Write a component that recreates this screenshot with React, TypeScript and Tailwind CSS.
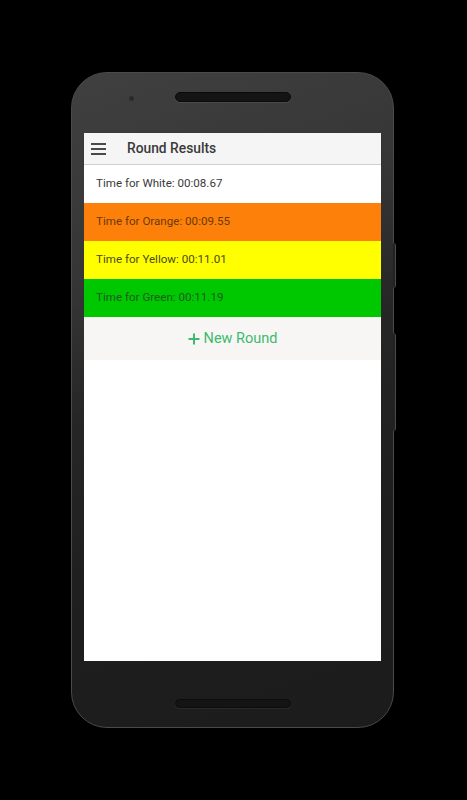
import React from "react";

const rows = [
  { label: "Time for White: 00:08.67", bg: "bg-white", text: "text-[#3a3a3a]" },
  { label: "Time for Orange: 00:09.55", bg: "bg-[#fd800b]", text: "text-[#6b3a08]" },
  { label: "Time for Yellow: 00:11.01", bg: "bg-[#ffff00]", text: "text-[#4a4a1a]" },
  { label: "Time for Green: 00:11.19", bg: "bg-[#00c800]", text: "text-[#1f5a1f]" },
];

function Hamburger() {
  return (
    <div className="flex flex-col gap-[3px] w-[15px]">
      <div className="h-[2px] bg-[#4a4a4a]" />
      <div className="h-[2px] bg-[#4a4a4a]" />
      <div className="h-[2px] bg-[#4a4a4a]" />
    </div>
  );
}

export default function App() {
  return (
    <div
      className="w-[467px] h-[800px] bg-black overflow-hidden pt-[72px] pl-[71px]"
      style={{ fontFamily: "Roboto, 'Noto Sans', sans-serif" }}
    >
      <div className="relative w-[323px] h-[656px] rounded-[36px] border border-[#4a4a4a] bg-[linear-gradient(160deg,#404040_0%,#353535_28%,#262626_45%,#1e1e1e_70%,#1c1c1c_100%)] flex flex-col">
        {/* side buttons */}
        <div className="absolute right-[-3px] top-[170px] w-[3px] h-[45px] rounded-r-sm bg-[#222] border-r border-[#4a4a4a]" />
        <div className="absolute right-[-3px] top-[260px] w-[3px] h-[98px] rounded-r-sm bg-[#222] border-r border-[#4a4a4a]" />

        {/* top bezel */}
        <div className="h-[60px] flex items-start pt-[19px]">
          <div className="w-[5px] h-[5px] rounded-full bg-[#2b2b2b] ml-[57px] mt-[4px]" />
          <div className="ml-[41px] w-[116px] h-[10px] rounded-full bg-[#141414] border border-[#0a0a0a] shadow-[0_1px_0_rgba(255,255,255,0.08)]" />
        </div>

        {/* screen */}
        <div className="ml-[12px] w-[297px] h-[528px] bg-white flex flex-col">
          <div className="h-[32px] bg-[#f5f5f5] border-b border-[#cfcfcf] shadow-[0_1px_2px_rgba(0,0,0,0.12)] flex items-center pl-[7px]">
            <Hamburger />
            <span className="ml-[21px] text-[13.8px] font-medium text-[#3a3a3a]">Round Results</span>
          </div>
          {rows.map((r) => (
            <div key={r.label} className={`h-[38px] ${r.bg} flex items-center pl-[12px]`}>
              <span className={`text-[11.6px] ${r.text}`}>{r.label}</span>
            </div>
          ))}
          <div className="h-[43px] bg-[#f7f6f4] flex items-center justify-center text-[#3dba6f]">
            <svg width="12" height="12" viewBox="0 0 12 12" className="mr-[4px]">
              <path d="M6 0.5v11M0.5 6h11" stroke="currentColor" strokeWidth="2" />
            </svg>
            <span className="text-[14.5px]">New Round</span>
          </div>
        </div>

        {/* bottom bezel */}
        <div className="flex-1 flex justify-center pt-[38px]">
          <div className="w-[116px] h-[9px] rounded-full bg-[#141414] border border-[#0c0c0c] shadow-[0_1px_0_rgba(255,255,255,0.06)]" />
        </div>
      </div>
    </div>
  );
}
